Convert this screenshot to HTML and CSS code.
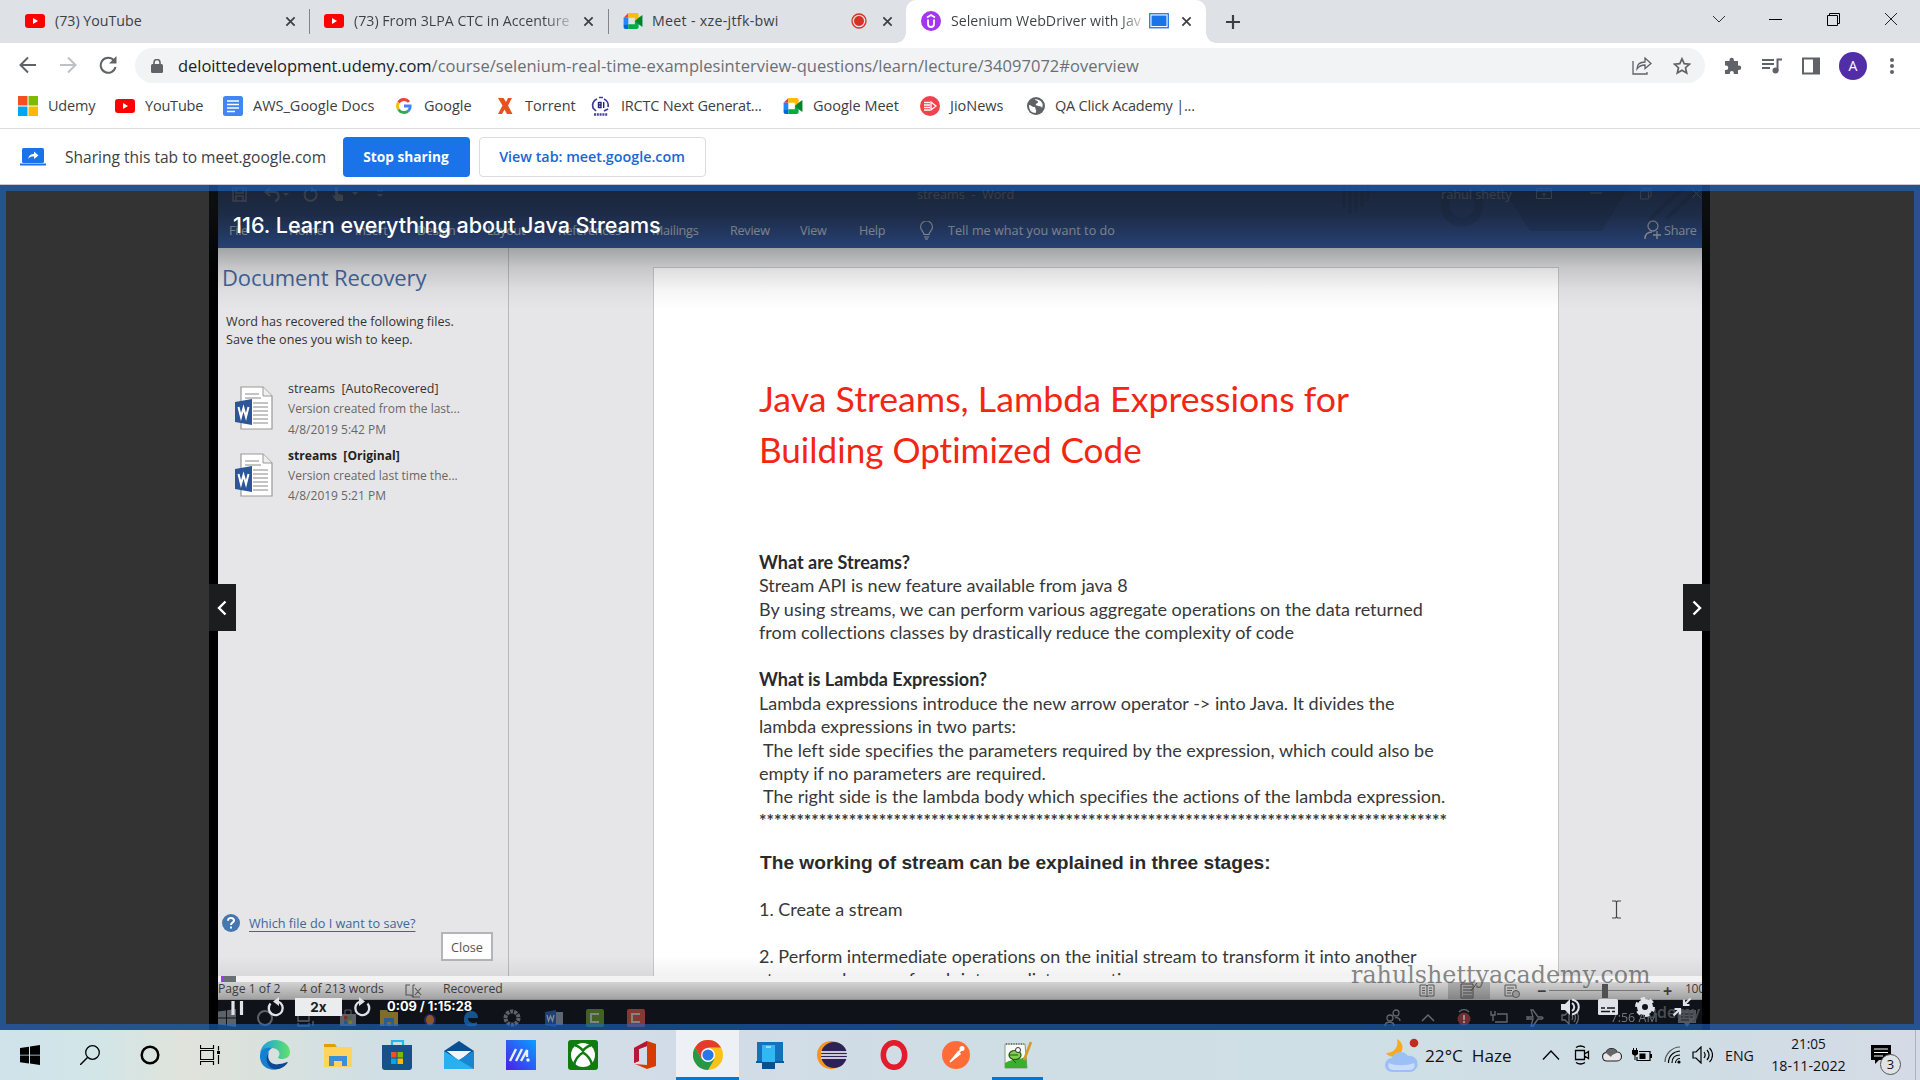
FILE: index.html
```html
<!DOCTYPE html>
<html lang="en">
<head>
<meta charset="utf-8">
<title>Selenium WebDriver with Java</title>
<link rel="stylesheet" href="styles.css">
</head>
<body>
<svg class="defs" aria-hidden="true">
  <defs>
    <symbol id="yt" viewBox="0 0 20 14"><rect width="20" height="14" rx="3" fill="#f00"/><path d="M8 4l5 3-5 3z" fill="#fff"/></symbol>
    <symbol id="meet" viewBox="0 0 20 17"><path d="M0 5l5-5v5z" fill="#ea4335"/><path d="M5 0h9a2 2 0 0 1 2 2v4l-4 3V5H5z" fill="#fbbc04"/><path d="M0 5h5v7H0z" fill="#2684fc"/><path d="M0 12h5v5H2a2 2 0 0 1-2-2z" fill="#0066da"/><path d="M5 12h7V8l4 3v4a2 2 0 0 1-2 2H5z" fill="#00ac47"/><path d="M12 8.500l4-3.500 4-3v13l-4-3z" fill="#00832d"/></symbol>
    <symbol id="x" viewBox="0 0 12 12"><path d="M1.500 1.500l9 9M10.500 1.500l-9 9" stroke="#3c4043" stroke-width="1.900" fill="none"/></symbol>
    <symbol id="wdoc" viewBox="0 0 38 44"><path d="M6 1h22l9 9v33H6z" fill="#fff" stroke="#999" stroke-width="1.200"/><path d="M28 1v9h9" fill="#eee" stroke="#999"/><path d="M10 8h14M10 12h16M18 17h15M18 21h15M18 25h15M18 29h15M18 33h15M18 37h15" stroke="#888"/><path d="M0 16l17-3v26L0 36z" fill="#2b579a"/><path d="M3.500 21l2.500 10 2.500-9 2.500 9 2.500-10" fill="none" stroke="#fff" stroke-width="2"/></symbol>
    <symbol id="circ" viewBox="0 0 18 20"><path d="M3.500 6.500A7 7 0 1 0 11 4.500" fill="none" stroke="#dfe3e8" stroke-width="2.300"/><path d="M12 0v9L6 4.500z" fill="#dfe3e8"/></symbol>
  </defs>
</svg>

<header class="tabstrip">
  <div class="tab tab-a"><svg width="20" height="14"><use href="#yt"/></svg><span class="t1">(73) YouTube</span><svg class="close" width="11" height="11"><use href="#x"/></svg></div>
  <div class="tab tab-b"><svg width="20" height="14"><use href="#yt"/></svg><span class="fade">(73) From 3LPA CTC in Accenture</span><svg class="close" width="11" height="11"><use href="#x"/></svg></div>
  <div class="tab tab-c"><svg width="20" height="16"><use href="#meet"/></svg><span class="t3">Meet - xze-jtfk-bwi</span>
    <svg class="rec" width="16" height="16" viewBox="0 0 16 16"><circle cx="8" cy="8" r="7" fill="none" stroke="#d93025" stroke-width="1.300"/><circle cx="8" cy="8" r="5" fill="#d93025"/></svg>
    <svg class="close" width="11" height="11"><use href="#x"/></svg></div>
  <div class="tab tab-d"><svg width="20" height="20" viewBox="0 0 20 20"><circle cx="10" cy="10" r="10" fill="#a435f0"/><path d="M6 6.500L10 4l4 2.500M7 8.500v4.500a3 3 0 0 0 6 0V8.500" fill="none" stroke="#fff" stroke-width="1.800"/></svg><span class="fade">Selenium WebDriver with Jav</span>
    <svg class="rec" width="20" height="16" viewBox="0 0 20 16"><rect x=".75" y=".75" width="18.500" height="14" fill="#fff" stroke="#1a73e8" stroke-width="1.300"/><rect x="2.500" y="2.500" width="15" height="10.500" fill="#1a73e8"/></svg>
    <svg class="close" width="11" height="11"><use href="#x"/></svg></div>
  <svg class="plus" width="16" height="16" viewBox="0 0 16 16"><path d="M8 1v14M1 8h14" stroke="#3c4043" stroke-width="2.200"/></svg>
  <div class="winbtns">
    <svg width="14" height="14" viewBox="0 0 14 14"><path d="M1 4l6 6 6-6" fill="none" stroke="#333"/></svg>
    <svg width="14" height="14" viewBox="0 0 14 14"><path d="M0 7.500h13" stroke="#000"/></svg>
    <svg width="14" height="14" viewBox="0 0 14 14"><path d="M.5 3.500h10v10h-10zM2.500 3V1.500h10v10H11" fill="none" stroke="#000"/></svg>
    <svg width="14" height="14" viewBox="0 0 14 14"><path d="M1 1l12 12M13 1L1 13" stroke="#222"/></svg>
  </div>
</header>

<nav class="toolbar">
  <svg width="18" height="18" viewBox="0 0 18 18"><path d="M17 9H2M9 1.500L1.500 9 9 16.500" fill="none" stroke="#5f6368" stroke-width="2"/></svg>
  <svg width="18" height="18" viewBox="0 0 18 18"><path d="M1 9h15M9 1.500L16.500 9 9 16.500" fill="none" stroke="#bdc1c6" stroke-width="2"/></svg>
  <svg width="18" height="18" viewBox="0 0 18 18"><path d="M15 4.500A7.500 7.500 0 1 0 16.500 11" fill="none" stroke="#5f6368" stroke-width="2"/><path d="M17.500 0v7.500H10z" fill="#5f6368"/></svg>
  <div class="omnibox">
    <svg width="12" height="14" viewBox="0 0 12 14"><rect x="0" y="5" width="12" height="9" rx="1.500" fill="#5f6368"/><path d="M3 6V3.500a3 3 0 0 1 6 0V6" fill="none" stroke="#5f6368" stroke-width="1.600"/></svg>
    <span class="url"><b>deloittedevelopment.udemy.com</b>/course/selenium-real-time-examplesinterview-questions/learn/lecture/34097072#overview</span>
    <svg class="share" width="20" height="18" viewBox="0 0 20 18"><path d="M1 4v13h14v-2" fill="none" stroke="#5f6368" stroke-width="1.300"/><path d="M5 12c0-5 3-7 8-7V1l6 5.500-6 5V8c-4 0-6 1-8 4z" fill="none" stroke="#5f6368" stroke-width="1.300"/></svg>
    <svg width="18" height="18" viewBox="0 0 18 18"><path d="M9 1.800l2.200 4.900 5.300.5-4 3.500 1.200 5.300L9 13.200 4.300 16l1.200-5.300-4-3.500 5.300-.5z" fill="none" stroke="#5f6368" stroke-width="1.700"/></svg>
  </div>
  <div class="actions">
    <svg width="18" height="18" viewBox="0 0 18 18"><path d="M1 4h4.500V3a2.200 2.200 0 0 1 4.400 0v1H14v4.500h1a2.200 2.200 0 0 1 0 4.400h-1V17H9.800v-1a2 2 0 0 0-4 0v1H1v-4h1a2 2 0 0 0 0-4.500H1z" fill="#5f6368"/></svg>
    <svg width="20" height="18" viewBox="0 0 20 18"><path d="M0 3h12M0 7h12M0 11h8" stroke="#5f6368" stroke-width="2"/><path d="M15.500 14V2.500H20" fill="none" stroke="#5f6368" stroke-width="2"/><circle cx="13.500" cy="13.500" r="3" fill="#5f6368"/></svg>
    <svg width="18" height="18" viewBox="0 0 18 18"><rect x="1" y="1.500" width="16" height="15" fill="none" stroke="#5f6368" stroke-width="2"/><path d="M11 1.500h6v15h-6z" fill="#5f6368"/></svg>
    <span class="avatar">A</span>
    <svg width="6" height="18" viewBox="0 0 6 18"><circle cx="3" cy="3" r="2" fill="#5f6368"/><circle cx="3" cy="9" r="2" fill="#5f6368"/><circle cx="3" cy="15" r="2" fill="#5f6368"/></svg>
  </div>
</nav>

<div class="bookmarks">
  <div><svg width="20" height="20" viewBox="0 0 20 20"><path d="M0 0h9.500v9.500H0z" fill="#f25022"/><path d="M10.500 0H20v9.500h-9.500z" fill="#7fba00"/><path d="M0 10.500h9.500V20H0z" fill="#00a4ef"/><path d="M10.500 10.500H20V20h-9.500z" fill="#ffb900"/></svg><span class="tight">Udemy</span></div>
  <div><svg width="20" height="14"><use href="#yt"/></svg><span class="tight">YouTube</span></div>
  <div><svg width="20" height="20" viewBox="0 0 20 20"><rect width="20" height="20" rx="2.500" fill="#4285f4"/><path d="M4 5h12M4 8.500h12M4 12h12M4 15.500h8" stroke="#fff" stroke-width="1.700"/></svg><span>AWS_Google Docs</span></div>
  <div><svg width="20" height="16" viewBox="0 0 20 16"><g fill="none" stroke-width="2.800"><path d="M15 3.800A6.500 6.500 0 0 0 4.500 4.600" stroke="#ea4335"/><path d="M4.500 4.600a6.500 6.500 0 0 0 0 6.800" stroke="#fbbc05"/><path d="M4.500 11.400a6.500 6.500 0 0 0 10 1.300" stroke="#34a853"/><path d="M14.500 12.700A6 6 0 0 0 16.200 8H10" stroke="#4285f4"/></g></svg><span>Google</span></div>
  <div><svg width="20" height="18" viewBox="0 0 20 18"><path d="M3 1h5.500L11 5l2-4h4l-4 7.500 4.500 8.500H12l-2.500-4.500L7 17H3l4.500-8.500z" fill="#e8501c"/></svg><span>Torrent</span></div>
  <div><svg width="20" height="20" viewBox="0 0 20 20"><path d="M6 3a7 7 0 0 0-4 9l3 3M13 3a7 7 0 0 1 4 8M17 13l-4 2" fill="none" stroke="#3b3b98" stroke-width="1.700"/><path d="M8 1.500h4" stroke="#3b3b98" stroke-width="1.500"/><path d="M7.500 6v6M7.500 6.500h2.500v2.500H7.500h2.500v2.500H7.500M12.700 6v6" fill="none" stroke="#22227a" stroke-width="1.400"/><path d="M3 18.500h14" stroke="#44449c" stroke-width="2.500" stroke-dasharray="2 .8"/></svg><span class="tight">IRCTC Next Generat...</span></div>
  <div><svg width="20" height="16"><use href="#meet"/></svg><span>Google Meet</span></div>
  <div><svg width="20" height="20" viewBox="0 0 20 20"><circle cx="10" cy="10" r="10" fill="#f0414d"/><path d="M4 6.500h6M4 9h6M4 11.500h6M4 14h6M11 6l5 4-5 4z" stroke="#fff" stroke-width="1.300" fill="none"/></svg><span>JioNews</span></div>
  <div><svg width="18" height="18" viewBox="0 0 18 18"><circle cx="9" cy="9" r="9" fill="#5f6368"/><path d="M2 8c2 0 3 2 5 2s1 2 2 3-1 2 0 3C4 16 2 13 2 8zM8 2c0 2 3 1 3 3S8 6 9 8s5 0 6 3c2-4 0-8-7-9z" fill="#fff"/></svg><span class="tight">QA Click Academy |...</span></div>
</div>

<div class="infobar">
  <svg width="26" height="18" viewBox="0 0 26 18"><rect x="2" y="0" width="22" height="15" rx="1.500" fill="#1a73e8"/><path d="M0 16.500h26" stroke="#1a73e8" stroke-width="2"/><path d="M8 11c1-4 3-5 6-5V3.500L18.500 7.500 14 11V8.500c-3 0-4.500.5-6 2.500z" fill="#fff"/></svg>
  <span class="msg">Sharing this tab to meet.google.com</span>
  <span class="btn btn-stop">Stop sharing</span>
  <span class="btn btn-view">View tab: meet.google.com</span>
</div>

<main class="viewport">
  <section class="player">
    <div class="frame">
      <div class="ribbon">
        <svg class="circuit" width="420" height="62" viewBox="0 0 420 62"><g fill="none" stroke="#10254a" opacity=".22"><path d="M4 0v22M10 0v28M16 0v26M22 0v22M28 0v14" stroke-width="3"/><circle cx="122" cy="20" r="17" stroke-width="9"/><path d="M160 0l30 46h72l28-46z" fill="#10254a" stroke="none"/><path d="M176 4l32 34M186 4l32 34M196 2l32 34M206 2l28 30M310 34l36-34M326 34l36-34" stroke-width="4"/></g></svg>
        <div class="titlebar">
          <svg width="15" height="15" viewBox="0 0 15 15"><path d="M1 1h13v13H1zM4 1v5h7V1M4 14V9h7v5" fill="none" stroke="#9aa9c4" stroke-width="1.500"/></svg>
          <svg width="26" height="15" viewBox="0 0 26 15"><path d="M6 1L1.500 5 6 9M2 5h8c6 0 6 8 1 9" fill="none" stroke="#9aa9c4" stroke-width="2"/><path d="M19 6h6l-3 3z" fill="#9aa9c4"/></svg>
          <svg width="15" height="15" viewBox="0 0 15 15"><path d="M9 2a6 6 0 1 1-5 1M9 0v5" fill="none" stroke="#9aa9c4" stroke-width="2"/></svg>
          <svg width="28" height="15" viewBox="0 0 28 15"><path d="M4 0h3v7l5 1v6H5L1 8l3 1z" fill="#9aa9c4"/><path d="M21 5h6l-3 3z" fill="#9aa9c4"/></svg>
          <svg width="8" height="12" viewBox="0 0 8 12"><path d="M1 3h6" stroke="#9aa9c4"/><path d="M1 6h6l-3 3z" fill="#9aa9c4"/></svg>
          <span class="docname">streams&nbsp; -&nbsp; Word</span>
          <span class="user">rahul shetty</span>
          <svg width="16" height="12" viewBox="0 0 16 12"><path d="M.5.5h15v10H.5zM.5 3h15M8 9V5M6 7l2-2 2 2" fill="none" stroke="#9aa9c4"/></svg>
          <svg width="12" height="12" viewBox="0 0 12 12"><path d="M0 5h12" stroke="#9aa9c4"/></svg>
          <svg width="12" height="12" viewBox="0 0 12 12"><path d="M.5 3h8v8h-8zM3 3V.5h8v8H9" fill="none" stroke="#9aa9c4"/></svg>
          <svg width="10" height="12" viewBox="0 0 10 12"><path d="M0 1l9 9M9 1l-9 9" stroke="#9aa9c4"/></svg>
        </div>
        <div class="menu">
          <span>File</span><span>Home</span><span>Insert</span><span>Design</span><span>Layout</span><span>References</span><span>Mailings</span><span>Review</span><span>View</span><span>Help</span>
          <svg width="15" height="19" viewBox="0 0 15 19"><path d="M5 13.500C5 11 1.500 9.500 1.500 6a6 6 0 0 1 12 0c0 3.500-3.500 5-3.500 7.500zM5 16h5M6 18h3" fill="none" stroke="#dde4f0" stroke-width="1.200"/></svg>
          <span class="tell">Tell me what you want to do</span>
          <svg width="18" height="20" viewBox="0 0 18 20"><circle cx="9" cy="6" r="5" fill="none" stroke="#dde4f0" stroke-width="1.300"/><path d="M1 19c0-5 3-7 7-7M9 15h8M13 11v8" fill="none" stroke="#dde4f0" stroke-width="1.300"/></svg>
          <span>Share</span>
        </div>
      </div>

      <div class="work">
        <aside class="recovery">
          <h2>Document Recovery</h2>
          <p class="intro">Word has recovered the following files.<br><span>Save the ones you wish to keep.</span></p>
          <div class="file first"><svg width="38" height="44"><use href="#wdoc"/></svg><div><p>streams&nbsp; [AutoRecovered]</p><p class="sub">Version created from the last...</p><p class="sub date">4/8/2019 5:42 PM</p></div></div>
          <div class="file"><svg width="38" height="44"><use href="#wdoc"/></svg><div><p class="strong">streams&nbsp; [Original]</p><p class="sub">Version created last time the...</p><p class="sub date">4/8/2019 5:21 PM</p></div></div>
          <div class="help"><svg width="18" height="18" viewBox="0 0 18 18"><circle cx="9" cy="9" r="9" fill="#4576b0"/><path d="M6 6.800c0-4 6-3.600 6-.3 0 2-3 2.200-3 4.500M9 12.500v2" fill="none" stroke="#fff" stroke-width="2"/></svg><a>Which file do I want to save?</a></div>
          <span class="closebtn">Close</span>
        </aside>
        <div class="canvas">
          <article class="page">
            <h1>Java Streams, Lambda Expressions for<br><span>Building Optimized Code</span></h1>
            <p><b>What are Streams?</b></p>
            <p>Stream API is new feature available from java 8</p>
            <p>By using streams, we can perform various aggregate operations on the data returned</p>
            <p>from collections classes by drastically reduce the complexity of code</p>
            <p class="gap"><b>What is Lambda Expression?</b></p>
            <p>Lambda expressions introduce the new arrow operator -&gt; into Java. It divides the</p>
            <p>lambda expressions in two parts:</p>
            <p>&nbsp;The left side specifies the parameters required by the expression, which could also be</p>
            <p>empty if no parameters are required.</p>
            <p>&nbsp;The right side is the lambda body which specifies the actions of the lambda expression.</p>
            <p class="stars">********************************************************************************************</p>
            <h3>The working of stream can be explained in three stages:</h3>
            <p class="step">1. Create a stream</p>
            <p class="gap">2. Perform intermediate operations on the initial stream to transform it into another</p>
            <p>stream and so on of each intermediate operation.</p>
          </article>
        </div>
      </div>

      <div class="seek"><i class="played"></i><i class="buffered"></i></div>
      <div class="status">
        <span class="s1">Page 1 of 2</span><span class="s2">4 of 213 words</span>
        <svg width="17" height="14" viewBox="0 0 17 14"><path d="M5 1H1v10h5l2 2V1M8 1h2M8 13h7M10 4l6 7M16 4l-6 7" fill="none" stroke="#555" stroke-width="1.100"/></svg>
        <span class="s3">Recovered</span>
        <div class="views">
          <span class="v1"><svg width="16" height="14" viewBox="0 0 16 14"><path d="M1 1h6l1 1 1-1h6v11H9l-1 1-1-1H1zM8 2v11M3 4h3M3 6.500h3M3 9h3M10 4h3M10 6.500h3M10 9h3" fill="none" stroke="#555"/></svg></span>
          <span class="v2"><svg width="18" height="16" viewBox="0 0 18 16"><path d="M1 1h12v14H1zM3 4h9M3 7h9M3 10h9M3 13h9M11 8l6-8" fill="none" stroke="#444"/></svg></span>
          <span class="v3"><svg width="16" height="14" viewBox="0 0 16 14"><path d="M9 12H1V1h11v4M3 4h7M3 6.500h5M3 9h4" fill="none" stroke="#555"/><circle cx="12" cy="10" r="3.500" fill="#999" stroke="#555"/></svg></span>
          <span class="v4">−</span><span class="slider"><i></i></span><span class="v4">+</span><span class="pct">100</span>
        </div>
      </div>
      <div class="vtask">
        <svg viewBox="0 0 18 18"><path d="M0 2.500l8-1v7H0zM9 1.300L18 0v8.500H9zM0 9.500h8v7l-8-1zM9 9.500h9V18l-9-1.300z" fill="#777c84"/></svg>
        <svg viewBox="0 0 18 18"><circle cx="9" cy="9" r="7" fill="none" stroke="#777c84" stroke-width="2"/></svg>
        <svg viewBox="0 0 18 18"><path d="M1 4V1h11v3M1 14v3h11v-3M1 6h11v6H1zM16 1v5M16 12v5" fill="none" stroke="#777c84" stroke-width="1.300"/></svg>
        <svg viewBox="0 0 18 18"><path d="M6 5V1h6v4" fill="none" stroke="#777c84"/><path d="M1 5h16v12H1z" fill="#777c84"/><path d="M5 7h3.500v3.500H5z" fill="#a33"/><path d="M9.500 7H13v3.500H9.500z" fill="#585"/><path d="M5 11.500h3.500V15H5z" fill="#27a"/><path d="M9.500 11.500H13V15H9.500z" fill="#a92"/></svg>
        <svg viewBox="0 0 18 18"><path d="M0 1h7l1 2h10v14H0z" fill="#a8893a"/><path d="M4 9h10v8h-3v-4H7v4H4z" fill="#2f7bb2"/></svg>
        <svg viewBox="0 0 18 18"><circle cx="9" cy="11" r="6" fill="#312a78"/><ellipse cx="9" cy="11" rx="4" ry="5" fill="#b56e2d"/></svg>
        <svg viewBox="0 0 18 18"><path d="M2 10C2 0 16-1 16 9H6c0 5 6 6 9 4v3C9 19 1 17 2 10z" fill="#176bb3"/></svg>
        <svg viewBox="0 0 18 18"><circle cx="9" cy="9" r="6.500" fill="none" stroke="#777c84" stroke-width="4" stroke-dasharray="3 1"/></svg>
        <svg viewBox="0 0 18 18"><path d="M8 3h10v13H8z" fill="#7d8490"/><path d="M0 3l11-2v17L0 16z" fill="#24509a"/><path d="M2 6l1.500 6L5.500 7l2 5L9 6" fill="none" stroke="#a9b1bd" stroke-width="1.300"/></svg>
        <svg viewBox="0 0 18 18"><rect width="18" height="18" rx="2" fill="#527d26"/><path d="M13 5H5v8h8" fill="none" stroke="#aaa" stroke-width="2"/></svg>
        <svg viewBox="0 0 18 18"><rect width="18" height="18" rx="2" fill="#ab463b"/><path d="M13 5H5v8h8" fill="none" stroke="#aaa" stroke-width="2"/></svg>
        <div class="vtray">
          <svg viewBox="0 0 18 18"><g fill="none" stroke="#777c84" stroke-width="1.300"><circle cx="12" cy="4" r="3"/><circle cx="6" cy="9" r="3"/><path d="M11 9c3-1 5 1 5 3M1 17c0-5 9-5 9 0"/></g></svg>
          <svg viewBox="0 0 18 18"><path d="M3 12l6-6 6 6" fill="none" stroke="#777c84" stroke-width="1.500"/></svg>
          <svg viewBox="0 0 18 18"><path d="M4 3c3-3 7-3 10 0" fill="none" stroke="#777c84" stroke-width="1.500"/><circle cx="9" cy="10" r="6.500" fill="#8a3538"/><path d="M9 6v5M9 12v2" stroke="#bbb" stroke-width="1.800"/></svg>
          <svg viewBox="0 0 18 18"><path d="M7 5h10v8H5M1 2v4h4V2M3 6v6" fill="none" stroke="#777c84" stroke-width="1.400"/></svg>
          <svg viewBox="0 0 18 18"><path d="M1 8h6L5 1h2l5 7h4l1 1-1 1h-4l-5 7H5l2-7H1l1-1z" fill="none" stroke="#777c84" stroke-width="1.300"/></svg>
          <svg viewBox="0 0 18 18"><path d="M1 6h3l4-4v13l-4-4H1zM11 6c1 2 1 3 0 5M13 4c2 3 2 6 0 9M15 2c3 4 3 9 0 13" fill="none" stroke="#777c84" stroke-width="1.300"/></svg>
          <span class="vclock">7:56 AM</span>
          <svg viewBox="0 0 18 18"><path d="M0 1h18v13h-6l-3 4-3-4H0z" fill="#666b73"/><path d="M3 5h12M3 8h12M3 11h8" stroke="#222" stroke-width="1.200"/></svg>
        </div>
      </div>
    </div>

    <div class="shade-top"></div>
    <div class="shade-bottom"></div>
    <div class="lecture">116. Learn everything about Java Streams</div>
    <span class="nav prev"><svg width="10" height="16" viewBox="0 0 10 16"><path d="M8.500 1.500L2 8l6.500 6.500" fill="none" stroke="#fff" stroke-width="2.400"/></svg></span>
    <span class="nav next"><svg width="10" height="16" viewBox="0 0 10 16"><path d="M1.500 1.500L8 8l-6.500 6.500" fill="none" stroke="#fff" stroke-width="2.400"/></svg></span>
    <svg class="ibeam" width="9" height="19" viewBox="0 0 9 19"><path d="M0 1h3.500l1 1 1-1H9M0 18h3.500l1-1 1 1H9M4.500 2v15" fill="none" stroke="#444" stroke-width="1.200"/></svg>
    <div class="watermark">rahulshettyacademy.com</div>
    <div class="udemy-mark">ûdemy</div>
    <div class="controls">
      <svg class="pause" width="13" height="15" viewBox="0 0 13 15"><path d="M2 0v14M10.500 0v14" stroke="#dfe3e8" stroke-width="3.200"/></svg>
      <svg class="back" width="18" height="20"><use href="#circ"/></svg>
      <span class="speed">2x</span>
      <svg class="fwd" width="18" height="20"><use href="#circ"/></svg>
      <span class="time">0:09 / 1:15:28</span>
      <div class="ctl-right">
        <svg width="20" height="18" viewBox="0 0 20 18"><path d="M0 6h4l5-5v16l-5-5H0z" fill="#dfe3e8"/><path d="M11 5c3 2 3 6 0 8M11 1.500c9 2 9 13 0 15" fill="none" stroke="#dfe3e8" stroke-width="2"/></svg>
        <svg width="20" height="16" viewBox="0 0 20 16"><rect width="20" height="16" rx="1.500" fill="#dfe3e8"/><path d="M3 9h4M9 9h8M3 12.500h9M14 12.500h3" stroke="#15181e" stroke-width="1.500"/></svg>
        <svg width="20" height="20" viewBox="0 0 20 20"><circle cx="10" cy="10" r="5.500" fill="none" stroke="#dfe3e8" stroke-width="5"/><circle cx="10" cy="10" r="8.600" fill="none" stroke="#dfe3e8" stroke-width="2.800" stroke-dasharray="4.500 4.500"/></svg>
        <svg width="20" height="20" viewBox="0 0 20 20"><path d="M18.500 1.500L12 8M12 2.500V8h5.500M1.500 18.500L8 12M8 17.500V12H2.500" fill="none" stroke="#dfe3e8" stroke-width="2.200"/></svg>
      </div>
    </div>
  </section>
</main>

<footer class="taskbar">
  <div class="apps">
    <span><svg width="20" height="20" viewBox="0 0 20 20"><path d="M0 3l9-1.300v8H0zM10 1.500L20 0v9.700H10zM0 10.500h9v8L0 17.300zM10 10.500h10V20l-10-1.400z" fill="#000"/></svg></span>
    <span><svg width="20" height="20" viewBox="0 0 20 20"><circle cx="12.500" cy="7.500" r="6.800" fill="none" stroke="#000" stroke-width="1.300"/><path d="M7.500 12.500L0 20" stroke="#000" stroke-width="1.400"/></svg></span>
    <span><svg width="20" height="20" viewBox="0 0 20 20"><circle cx="10" cy="10" r="8.300" fill="none" stroke="#000" stroke-width="2.500"/></svg></span>
    <span><svg width="20" height="20" viewBox="0 0 20 20"><path d="M.5 0v3.500h13V0M.5 20v-3.500h13V20M.5 5.500h13v9H.5zM18.500 1v4.500M18.500 10v9" fill="none" stroke="#000" stroke-width="1.200"/><path d="M17 6h3v3h-3z"/></svg></span>
    <span><svg width="30" height="30" viewBox="0 0 30 30"><defs><linearGradient id="e1" x1="0" x2="1"><stop offset="0" stop-color="#1b9de2"/><stop offset="1" stop-color="#5fe36a"/></linearGradient></defs><path d="M0 14C1 5 8 0 15 0c9 0 15 6 15 12 0 5-4 7-8 7-3 0-5-1-3-3 2-4-2-8-7-8C7 8 2 10 0 14z" fill="url(#e1)"/><path d="M0 15C1 8 8 7 12 8c-4 3-6 7-3 13 2 5 8 8 13 6-8 6-23 2-22-12z" fill="#1580d0"/><path d="M9 12c-3 8 3 14 10 12 4 0 7-2 9-2-5 9-18 10-21 0-1-4 0-8 2-10z" fill="#0c4a94"/></svg></span>
    <span><svg width="28" height="24" viewBox="0 0 28 24"><path d="M0 1h11l2 3v4H0z" fill="#e0a100"/><path d="M0 4h28v20H0z" fill="#ffd45e"/><path d="M5 23V13h18v10h-5v-5h-8v5z" fill="#3b8fd6"/></svg></span>
    <span><svg width="30" height="30" viewBox="0 0 30 30"><path d="M10 6V1h11v5" fill="none" stroke="#23b6f0" stroke-width="2.200"/><path d="M0 5h30v22a3 3 0 0 1-3 3H3a3 3 0 0 1-3-3z" fill="#17508a"/><path d="M9 12h5.500v5.500H9z" fill="#f25022"/><path d="M15.500 12H21v5.500h-5.500z" fill="#7fba00"/><path d="M9 18.500h5.500V24H9z" fill="#00a4ef"/><path d="M15.500 18.500H21V24h-5.500z" fill="#ffb900"/></svg></span>
    <span><svg width="30" height="28" viewBox="0 0 30 28"><path d="M0 10L15 0l15 10v18H0z" fill="#0a4f92"/><path d="M3 10h24L15 20z" fill="#f3f5f8"/><path d="M0 10l15 9 15-9v18H0z" fill="#29b0ee"/><path d="M3 10h24L15 18z" fill="#f3f5f8"/><path d="M15 19l15-9v18z" fill="#1a86d2"/></svg></span>
    <span><svg width="30" height="30" viewBox="0 0 30 30"><defs><linearGradient id="ma" x1="0" y1="1" x2="1" y2="0"><stop offset="0" stop-color="#4b1ee8"/><stop offset="1" stop-color="#0aa0ff"/></linearGradient></defs><path d="M0 0h30v30H0z" fill="url(#ma)"/><path d="M4 21l6-12M10 21l6-12M15 21l6-11v7" fill="none" stroke="#e8eeff" stroke-width="2.400"/><circle cx="22" cy="20" r="1.700" fill="#fff"/></svg></span>
    <span><svg width="30" height="30" viewBox="0 0 30 30"><rect width="30" height="30" rx="3" fill="#107c10"/><circle cx="15" cy="15" r="12" fill="#fff"/><path d="M7 5.500c3 0 6 3 8 5 2-2 5-5 8-5M6 25c1-5 5-10 9-12.500C19 15 23 20 24 25" fill="none" stroke="#107c10" stroke-width="2.600"/></svg></span>
    <span><svg width="24" height="28" viewBox="0 0 24 28"><path d="M1 7L14 0l9 3v22l-9 3-12-5 12 1V5L6 8v12l-5 2z" fill="#d83b01"/><path d="M1 7L14 0v5L6 8v12l-5 2z" fill="#b5173a"/></svg></span>
    <span class="active"><svg width="30" height="30" viewBox="0 0 30 30"><circle cx="15" cy="15" r="15" fill="#fbc116"/><path d="M2 7.500A15 15 0 0 1 28 7.500H15L8.500 19z" fill="#e33b2e"/><path d="M2 7.500A15 15 0 0 0 15 30l6.500-11H8.500z" fill="#279847"/><circle cx="15" cy="15" r="7" fill="#fff"/><circle cx="15" cy="15" r="5.600" fill="#2a77e8"/></svg></span>
    <span><svg width="28" height="28" viewBox="0 0 28 28"><path d="M1 1h26v20H1z" fill="#1273bd"/><path d="M0 20h28v2H0z" fill="#0c5c9c"/><path d="M6 4h13v24H6z" fill="#31b7f2"/><path d="M6 21h13v7H6z" fill="#0b4f8c"/><path d="M10 6h5" stroke="#fff"/></svg></span>
    <span><svg width="30" height="28" viewBox="0 0 30 28"><circle cx="14" cy="14" r="14" fill="#f7941e"/><circle cx="17" cy="14" r="13" fill="#2c2255"/><path d="M4 11h26M4 14h26M4 17h26" stroke="#fff" stroke-width="1.500"/></svg></span>
    <span><svg width="28" height="30" viewBox="0 0 28 30"><ellipse cx="14" cy="15" rx="10.700" ry="12.300" fill="none" stroke="#e31b2c" stroke-width="5.500"/></svg></span>
    <span><svg width="28" height="28" viewBox="0 0 28 28"><circle cx="14" cy="14" r="14" fill="#ff6c37"/><path d="M8 21l8-10 2 2z" fill="#fff" stroke="#fff" stroke-width="1.500"/><path d="M16 12l4-4" stroke="#fff" stroke-width="2"/><circle cx="20" cy="7.500" r="2.500" fill="#fff"/></svg></span>
    <span class="open"><svg width="28" height="28" viewBox="0 0 28 28"><path d="M1 3h20l2 24H1z" fill="#f7f9f5" stroke="#8a9a86"/><path d="M1 22c7-5 15-2 21-7l1 12H1z" fill="#3cae2d"/><path d="M2 3h18" stroke="#777" stroke-width="2" stroke-dasharray="1 1.500"/><ellipse cx="11" cy="14" rx="6" ry="4.500" fill="#7fd04a" stroke="#24521c" stroke-width="1.200"/><circle cx="14" cy="9" r="2.500" fill="#fff" stroke="#333"/><path d="M5 14h9M8 18l4 4" stroke="#24521c"/><path d="M27 1l-7 18" stroke="#d99a25" stroke-width="2.600"/></svg></span>
  </div>
  <div class="tray">
    <svg class="weather" width="36" height="34" viewBox="0 0 36 34"><path d="M13 1c8 4 7 14-1 18-4 0-8-1-10-4 8 0 13-6 11-14z" fill="#f7a91f"/><circle cx="30" cy="5" r="4.300" fill="#c42b1c"/><path d="M8 34a7 7 0 0 1 0-14 9 9 0 0 1 16-2 7 7 0 0 1 3 16z" fill="#9cc0f5"/><path d="M9 32c-4 0-6-4-4-7 6 3 18 3 25 0 2 4-1 7-4 7z" fill="#c9dcfb"/></svg>
    <span class="wtext">22°C&nbsp; Haze</span>
    <svg class="i1" width="18" height="12" viewBox="0 0 18 12"><path d="M1 10.500L9 2l8 8.500" fill="none" stroke="#000" stroke-width="1.300"/></svg>
    <svg class="i2" width="16" height="20" viewBox="0 0 16 20"><path d="M1.500 5.500h9v9h-9zM10.500 9l4-2.500v7l-4-2.500M2 2.500c3-2 6-2 9 0M2 17.500c3 2 6 2 9 0" fill="none" stroke="#000" stroke-width="1.300"/></svg>
    <svg class="i3" width="20" height="14" viewBox="0 0 20 14"><path d="M5 13a4.300 4.300 0 0 1-1-8.500 6 6 0 0 1 11-.5 4.500 4.500 0 0 1 0 9z" fill="#e9e9e9" stroke="#222" stroke-width="1.100"/><path d="M4 5c1-5 10-6 11 0 0 0-5 1-6 4z" fill="#666"/></svg>
    <svg class="i4" width="20" height="14" viewBox="0 0 20 14"><path d="M7 3.500h11v9H5V9" fill="none" stroke="#000" stroke-width="1.200"/><path d="M7.500 5.500h6v5.500h-6zM18 6h2v4h-2zM0 2h6v4L4 7.500H2L0 6z"/><path d="M1.500 0v2M4.500 0v2M3 7v5" stroke="#000"/></svg>
    <svg class="i5" width="18" height="18" viewBox="0 0 18 18"><g fill="none" stroke="#000" stroke-width="1.200"><path d="M1 16C1 8 8 1 16 1" opacity=".6"/><path d="M4.500 17C4.500 10 9 5.500 16 5"/><path d="M8 17c0-5 3-8 8-8M11.500 17c0-2.500 2-4.500 4.500-4.500"/></g><circle cx="15" cy="16" r="1.600"/></svg>
    <svg class="i6" width="21" height="18" viewBox="0 0 21 18"><path d="M1 6h3l5-5v16l-5-5H1zM12 6c1.500 2 1.500 4 0 6M15 4c2.500 3 2.500 7 0 10M17.500 2c4 4 4 10 0 14" fill="none" stroke="#000" stroke-width="1.200"/></svg>
    <span class="lang">ENG</span>
    <div class="clock"><span class="hm">21:05</span><span>18-11-2022</span></div>
    <div class="notif"><svg width="20" height="19" viewBox="0 0 20 19"><path d="M0 0h20v15H8l-4 4v-4H0z"/><path d="M3 4h14M3 7.500h14M3 11h9" stroke="#fff" stroke-width="1.200"/></svg><i>3</i></div>
  </div>
</footer>
</body>
</html>
```
FILE: styles.css
```css
* { box-sizing: border-box; }
html, body { margin: 0; padding: 0; }
body { width: 1920px; height: 1080px; overflow: hidden; display: flex; flex-direction: column; background: #fff; font-family: "Open Sans", "Noto Sans", sans-serif; color: #3c4043; white-space: nowrap; }
p, h1, h2, h3 { margin: 0; font-weight: 400; }
svg { flex: none; display: block; }
i { font-style: normal; }
.defs { position: absolute; width: 0; height: 0; }

/* tab strip */
.tabstrip { flex: none; height: 43px; background: #dee1e6; display: flex; align-items: center; font-size: 14.2px; }
.tab { display: flex; align-items: center; height: 43px; padding-bottom: 1px; }
.tab > span { margin-left: 10px; padding-bottom: 2px; }
.tab .close { margin-left: auto; }
.tab-a, .tab-b { background: linear-gradient(#80868b, #80868b) right 9px / 1px 25px no-repeat; }
.tab-a { width: 310px; padding-left: 25px; padding-right: 14px; }
.tab-b { width: 299px; padding-left: 14px; padding-right: 15px; }
.tab-c { width: 297px; padding-left: 14px; padding-right: 13px; }
.tab-c .rec { margin-left: auto; }
.tab-c .close { margin-left: 15px; }
.tab .t3 { letter-spacing: .3px; margin-left: 9px; }
.tab-d { width: 300px; padding-left: 15px; padding-right: 14px; background: #fff; border-radius: 10px 10px 0 0; position: relative; }
.tab-d::before, .tab-d::after { content: ""; position: absolute; bottom: 0; width: 10px; height: 10px; }
.tab-d::before { left: -10px; background: radial-gradient(circle at 0 0, #dee1e6 9.5px, #fff 10px); }
.tab-d::after { right: -10px; background: radial-gradient(circle at 100% 0, #dee1e6 9.5px, #fff 10px); }
.tab-d .rec { margin-left: auto; }
.tab-d .close { margin-left: 12px; }
.tab-d .fade { width: 191px; }
.fade { background: linear-gradient(90deg, #3c4043 88%, rgba(60, 64, 67, .25)); -webkit-background-clip: text; background-clip: text; color: transparent; }
.plus { margin-left: 19px; }
.winbtns { margin-left: auto; display: flex; gap: 43.5px; padding: 0 22px 6px 0; }

/* toolbar */
.toolbar { flex: none; height: 45px; display: flex; align-items: center; padding-left: 19px; gap: 22px; }
.toolbar > svg { margin-bottom: 1px; }
.omnibox { width: 1570px; height: 35px; margin-left: -4px; background: #f1f3f4; border-radius: 18px; display: flex; align-items: center; padding: 0 14px 0 16px; }
.url { font-size: 16.5px; margin-left: 15px; padding-bottom: 1px; color: #6b6f74; letter-spacing: .03px; }
.url b { font-weight: 400; color: #202124; letter-spacing: -.05px; }
.share { margin-left: auto; margin-right: 21px; }
.actions { display: flex; align-items: center; gap: 20px; margin-left: -3px; }
.avatar { width: 28px; height: 28px; border-radius: 50%; background: #512da8; color: #fff; font-size: 14px; display: flex; align-items: center; justify-content: center; }
.actions .avatar { margin: 0 2px 0 -1px; }

/* bookmarks */
.bookmarks { flex: none; height: 41px; border-bottom: 1px solid #dadce0; padding: 0 0 4px 18px; display: grid; grid-template-columns: 97px 108px 171px 101px 96px 192px 137px 106px 180px; font-size: 14.5px; }
.bookmarks div { display: flex; align-items: center; gap: 10px; }
.bookmarks span { padding-bottom: 1px; }
.bookmarks .tight { letter-spacing: -.2px; }
.bookmarks div:last-child { padding-left: 1px; }

/* sharing bar */
.infobar { flex: none; height: 56px; border-bottom: 1px solid #c8ccd2; display: flex; align-items: center; padding-left: 20px; }
.msg { margin-left: 19px; width: 278px; font-size: 15.55px; }
.btn { height: 40px; border-radius: 4px; display: flex; align-items: center; justify-content: center; }
.btn-stop { width: 127px; background: #1a73e8; color: #fff; font-weight: 700; font-size: 13.7px; padding-right: 1px; }
.btn-view { margin-left: 9px; width: 227px; border: 1px solid #dadce0; color: #1967d2; font-weight: 600; font-size: 14.3px; padding-right: 1px; }

/* shared tab content */
.viewport { flex: none; height: 845px; background: #333; position: relative; padding-left: 209px; }
.viewport::after { content: ""; position: absolute; inset: 0; border: 6px solid rgba(33, 104, 204, .6); pointer-events: none; }
.player { width: 1501px; height: 845px; background: #000; position: relative; padding: 0 8px 0 9px; }
.frame { height: 845px; display: flex; flex-direction: column; overflow: hidden; }

.ribbon { flex: none; height: 63px; background: #31569f; position: relative; color: #dde4f0; font-size: 12.6px; }
.circuit { position: absolute; left: 1122px; top: 0; }
.titlebar { height: 18px; display: flex; align-items: center; padding-left: 14px; font-size: 12.7px; color: #9aa9c4; position: relative; }
.titlebar svg:nth-child(2) { margin-left: 17px; }
.titlebar svg:nth-child(3) { margin-left: 13px; }
.titlebar svg:nth-child(4) { margin-left: 13px; }
.titlebar svg:nth-child(5) { margin-left: 17px; }
.docname { margin-left: 533px; width: 524px; }
.user { width: 95px; }
.titlebar svg:nth-child(8) { margin-right: 38px; }
.titlebar svg:nth-child(9) { margin-right: 38px; }
.titlebar svg:nth-child(10) { margin-right: 40px; }
.menu { height: 40px; margin-top: 7px; padding-left: 11px; display: grid; align-items: center; grid-template-columns: 60px 66px 62px 70px 71px 94px 78px 70px 59px 60px 29px 696px 20px 38px; position: relative; }
.menu span { letter-spacing: -.25px; }
.menu .tell { letter-spacing: .05px; }

.work { flex: none; height: 728px; display: flex; overflow: hidden; }
.recovery { width: 291px; background: #e6e6e8; border-right: 1px solid #b9b9bb; display: flex; flex-direction: column; padding: 13px 15px 15px 4px; color: #333; }
.recovery h2 { font-size: 22px; letter-spacing: -.1px; line-height: 32px; color: #41659a; }
.intro { margin: 20px 0 30px 4px; font-size: 12.6px; line-height: 18px; }
.file { display: flex; margin: 0 0 6px 13px; gap: 15px; font-size: 12.5px; line-height: 20.3px; }
.file svg { margin-top: 7px; }
.file .sub { font-size: 12px; color: #666; }
.file .strong { font-weight: 700; font-size: 12.1px; color: #222; }
.help { margin-top: auto; display: flex; align-items: center; gap: 9px; font-size: 12.7px; line-height: 16px; height: 16px; margin-bottom: 1px; color: #41659a; }
.help a { text-decoration: underline; text-underline-offset: 3px; }
.closebtn { align-self: flex-end; width: 52px; height: 29px; border: 2px solid #b4b4b6; background: #fdfdfd; font-size: 12.7px; display: flex; align-items: center; justify-content: center; color: #555; }
.canvas { flex: 1; background: #e6e6e8; padding: 19px 0 0 144px; }
.page { width: 906px; height: 760px; background: #fff; border: 1px solid #c8c8ca; padding: 106px 0 0 105px; font-family: Lato, sans-serif; font-variant-ligatures: none; font-size: 18px; line-height: 23.45px; color: #383838; }
.page h1 { font-size: 35.7px; line-height: 50px; color: #f22613; margin-bottom: 76px; }
.page h1 span { font-size: 35.1px; }
.page b { font-weight: 700; color: #2a2a2a; }
.page .gap { margin-top: 23.4px; }
.page .stars { font-size: 17.6px; font-weight: 700; letter-spacing: 0; }
.page h3 { font: 700 19.15px/23.5px "Liberation Sans", Arial, sans-serif; color: #2a2a2a; margin: 19px 0 23px 1px; }

.seek { flex: none; height: 6px; background: #f3f3f3; display: flex; padding-left: 3px; }
.played { width: 3px; background: #a435f0; }
.buffered { width: 12px; background: #6a6f73; }
.status { flex: none; height: 18px; background: linear-gradient(#d3d3d4, #a2a2a3); border-bottom: 1px solid #8b8c8e; display: flex; align-items: center; font-size: 12.2px; line-height: 14px; color: #3c3c3c; }
.s1, .s2, .s3 { padding-bottom: 4px; }
.s1 { width: 82px; }
.s2 { width: 105px; }
.s3 { margin-left: 21px; }
.views { margin-left: auto; display: flex; align-items: center; height: 17px; }
.views span { height: 17px; display: flex; align-items: center; justify-content: center; }
.views .v1 { width: 33px; padding-right: 10px; }
.views .v2 { width: 42px; background: rgba(0, 0, 0, .18); }
.views .v3 { width: 44px; }
.views .v4 { width: 15px; font-size: 16px; font-weight: 700; }
.views .slider { width: 111px; background: linear-gradient(#777, #777) center / 100% 1px no-repeat; }
.slider i { width: 6px; height: 14px; background: #505050; }
.views .pct { width: 27px; padding: 0 0 3px 10px; justify-content: flex-start; overflow: hidden; letter-spacing: -.4px; }
.vtask { flex: none; height: 30px; background: #0f1218; display: flex; padding-top: 9px; }
.vtask > svg { width: 18px; height: 18px; margin-right: 23.2px; opacity: .75; }
.vtask > svg:nth-child(2) { margin-left: -3px; }
.vtray { margin-left: auto; display: flex; gap: 17.5px; padding-right: 6px; opacity: .8; }
.vtray svg { width: 18px; height: 18px; }
.vclock { width: 64px; padding-left: 14px; font-size: 12.5px; line-height: 17px; color: #8b9098; }

/* player chrome over the video */
.shade-top { position: absolute; left: 0; right: 0; top: 0; height: 125px; background: linear-gradient(rgba(18, 20, 22, .76), rgba(18, 20, 22, .64) 24%, rgba(18, 20, 22, .32) 50%, rgba(18, 20, 22, .15) 66%, rgba(18, 20, 22, .04) 84%, rgba(18, 20, 22, 0)); }
.shade-bottom { position: absolute; left: 9px; right: 8px; top: 771px; height: 20px; background: linear-gradient(rgba(18, 20, 22, 0), rgba(18, 20, 22, .06)); }
.lecture { position: absolute; left: 24px; top: 25px; font: 500 21.55px/30px Inter, sans-serif; color: #fff; }
.nav { position: absolute; top: 399px; width: 27px; height: 47px; background: #1c1d1f; display: flex; align-items: center; justify-content: center; }
.prev { left: 0; padding-right: 1px; }
.next { right: 0; }
.ibeam { position: absolute; left: 1403px; top: 715px; }
.watermark { position: absolute; left: 1142px; top: 775px; font: 23.8px/30px "DejaVu Serif", serif; color: rgba(60, 60, 60, .62); }
.udemy-mark { position: absolute; right: 10px; top: 815px; font: 600 16px/24px "Open Sans", sans-serif; color: #4a4e55; }
.controls { position: absolute; left: 22px; right: 18px; top: 812px; height: 20px; display: flex; align-items: center; }
.pause { margin-top: 3px; }
.back { margin-left: 23px; }
.speed { margin: 0 11px 0 10px; width: 47px; height: 18px; background: #ebecee; color: #1c1d1f; font: 700 13.5px/18px Inter, sans-serif; text-align: center; }
.fwd { transform: scaleX(-1); }
.time { margin-left: 16px; color: #fff; font: 700 12.8px/20px Inter, sans-serif; }
.ctl-right { margin-left: auto; display: flex; align-items: center; gap: 17px; }

/* taskbar */
.taskbar { flex: none; height: 50px; display: flex; align-items: center; color: #111; background: linear-gradient(90deg, #d0e2ea 0, #d2e6e8 5%, #dfe3db 9.500%, #dce2dc 12%, #cfdfe5 20%, #d2dce8 36%, #cfdde4 50%, #cfdfe6 70%, #cfdde5 88%, #d5dbe6 100%); }
.apps { display: flex; }
.apps span { width: 62.1px; height: 50px; display: flex; align-items: center; justify-content: center; }
.apps span:nth-child(-n+4) { width: 60px; }
.apps span:nth-child(5) { width: 69px; }
.apps span:nth-child(6) { width: 57px; }
.apps .active { background: #edf1f6; border-bottom: 3px solid #0078d7; padding-top: 3px; }
.apps .open { background: linear-gradient(#0078d7, #0078d7) center bottom / 51px 3px no-repeat; }
.tray { margin-left: auto; display: flex; align-items: center; }
.wtext { margin-left: 5px; width: 117px; font-size: 17.2px; }
.i2 { margin-left: 14px; }
.i3 { margin-left: 12px; }
.i4 { margin-left: 10px; }
.i5 { margin-left: 12px; }
.i6 { margin-left: 10px; }
.lang { margin-left: 12px; width: 46px; font-size: 14.2px; }
.clock { width: 75px; display: flex; flex-direction: column; align-items: center; font-size: 14.3px; line-height: 22.5px; }
.clock .hm { font-size: 13.6px; }
.notif { display: flex; margin-left: 25px; width: 49px; height: 50px; padding-top: 15px; position: relative; background: linear-gradient(#a9b4bd, #a9b4bd) 44px 0 / 1px 50px no-repeat; }
.notif i { position: absolute; left: 9px; top: 24px; width: 21px; height: 21px; border-radius: 50%; border: 1px solid #555; background: #dfe3e6; font-size: 13px; line-height: 19px; text-align: center; }
```
